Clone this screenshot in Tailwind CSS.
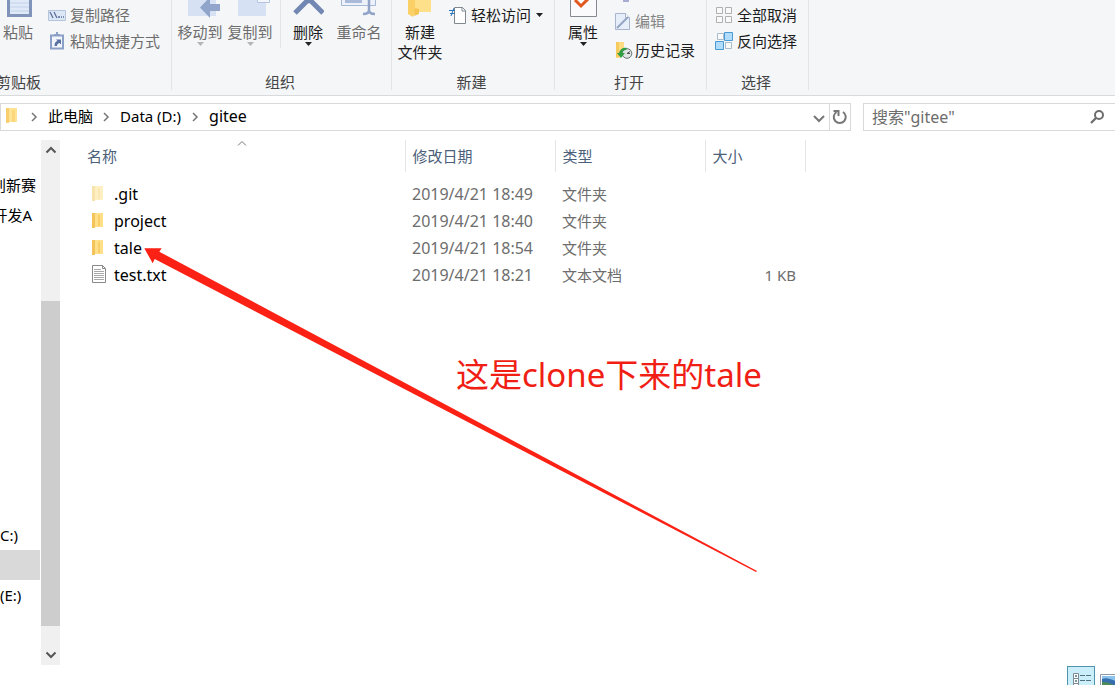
<!DOCTYPE html>
<html lang="zh-CN">
<head>
<meta charset="utf-8">
<title>gitee</title>
<script src="https://cdn.jsdelivr.net/npm/@tailwindcss/browser@4"></script>
</head>
<body class="h-screen overflow-hidden flex flex-col bg-white text-[15px] leading-5 text-[#1c1c1c] font-['Noto_Sans','Noto_Sans_CJK_SC',sans-serif]">

<!-- Ribbon -->
<header class="flex h-24 shrink-0 whitespace-nowrap bg-[#f5f6f8] border-b border-[#d9dadc]">
  <section class="relative flex w-[172px] shrink-0 flex-col">
    <div class="flex h-[72px] items-start">
      <button class="flex w-9 flex-col items-center text-[#6d6d6d]">
        <svg class="h-[22px] w-7" viewBox="-1 0 28 22"><path d="M2 0h25v17H2z" fill="#8093b8"/><path d="M5 0h19v14H5z" fill="#dfe9f7"/><path d="M5 3h19M5 7h19M5 11h19" stroke="#c3d2ea"/></svg>
        粘贴</button>
      <div class="ml-3 flex flex-col gap-1.5 pt-[5px] text-[#6d6d6d]">
        <button class="flex items-center gap-1"><svg class="h-5 w-[18px]" viewBox="0 0 18 20"><path d="M.5 5.500h17v10H.5z" fill="#dce7f6" stroke="#b5c3dd"/><path d="M2 7l3 6M6 7l3 6" stroke="#5c6f9a" stroke-width="1.300"/><path d="M10 12h2M13 12h1M15 12h1" stroke="#5c6f9a" stroke-width="1.500"/></svg>复制路径</button>
        <button class="flex items-center gap-1"><svg class="h-5 w-[18px]" viewBox="0 0 18 20"><path d="M3 4.500h12v13H3z" fill="#f2f6fc" stroke="#8ba0c6" stroke-width="2"/><path d="M6 5V3h2V1h2v2h2v2z" fill="#8ba0c6"/><path d="M6.500 15c0-3 1-4.500 3-5L8 8.500h5v5L11.500 12c-2 .5-2.500 1.500-2.500 3z" fill="#5972a2"/></svg>粘贴快捷方式</button>
      </div>
    </div>
    <div class="-ml-1 text-[#444]">剪贴板</div>
    <i class="absolute right-0 top-0 h-[90px] w-px bg-[#e3e4e7]"></i>
  </section>

  <section class="relative flex w-[220px] shrink-0 flex-col">
    <div class="flex h-[72px] items-start text-[#6d6d6d]">
      <button class="ml-[3px] flex w-[50px] flex-col items-center">
        <svg class="h-[22px] w-10" viewBox="-8 0 40 22"><path d="M0 0h28v16H0z" fill="#d6e1f3"/><path d="M12 7.500L22 -3v7h10v7H22v7z" fill="#91a4ca"/></svg>
        移动到
        <svg class="h-1 w-[7px]" viewBox="0 0 7 4"><path d="M0 0h7L3.500 4z" fill="#b5b5b5"/></svg></button>
      <button class="flex w-[50px] flex-col items-center">
        <svg class="h-[22px] w-10" viewBox="-8 0 40 22"><path d="M0 0h28v16H0z" fill="#d6e1f3"/><path d="M19.500-2v4.500h12V-2" fill="#f2f6fc" stroke="#b5c4df"/></svg>
        复制到
        <svg class="h-1 w-[7px]" viewBox="0 0 7 4"><path d="M0 0h7L3.500 4z" fill="#b5b5b5"/></svg></button>
      <i class="ml-[5px] h-12 w-px bg-[#e3e4e7]"></i>
      <button class="ml-1 flex w-[46px] flex-col items-center text-[#1c1c1c]">
        <svg class="h-[22px] w-8" viewBox="-1 0 32 22"><path d="M2 13L16 -1L30 13M10-6L16 0L22-6" fill="none" stroke="#7287b1" stroke-width="5"/></svg>
        删除
        <svg class="h-1 w-[7px]" viewBox="0 0 7 4"><path d="M0 0h7L3.500 4z" fill="#222"/></svg></button>
      <button class="ml-[3px] flex w-[50px] flex-col items-center">
        <svg class="h-[22px] w-9" viewBox="0 0 36 22"><path d="M.5-2v7.500h34V-2" fill="#edf2fa" stroke="#a7b7d6"/><path d="M4 0h17v3H4z" fill="#a9bada"/><path d="M28 0v12M22 14c4 0 6-1 6-4c0 3 2 4 6 4" fill="none" stroke="#91a4c8" stroke-width="2.500"/></svg>
        重命名</button>
    </div>
    <div class="pr-1 text-center text-[#444]">组织</div>
    <i class="absolute right-0 top-0 h-[90px] w-px bg-[#e3e4e7]"></i>
  </section>

  <section class="relative flex w-[163px] shrink-0 flex-col">
    <div class="flex h-[72px] items-start">
      <button class="ml-1 flex w-12 flex-col items-center">
        <svg class="h-[22px] w-7" viewBox="0 0 28 22"><path d="M2 0h23v12H2z" fill="#ffe08a"/><path d="M2 0h7v12l-2 5-5-3z" fill="#fbd066"/><path d="M9 8l4 1v5l-5 2z" fill="#f5c453"/></svg>
        <span>新建<br>文件夹</span></button>
      <button class="ml-[5px] mt-[5px] flex items-center gap-1"><svg class="h-5 w-[18px]" viewBox="0 0 18 20"><path d="M5.500 2.500h8l3 3v13h-11z" fill="#fff" stroke="#81888f"/><path d="M13 2.500v3.500h3.500" fill="none" stroke="#81888f"/><path d="M0 5.500h6M1 8.500h5" stroke="#2b74b5" stroke-width="1.200"/><path d="M5 3L2 11" stroke="#2b74b5"/></svg>轻松访问<svg class="ml-px h-1 w-[7px]" viewBox="0 0 7 4"><path d="M0 0h7L3.500 4z" fill="#222"/></svg></button>
    </div>
    <div class="pr-1 text-center text-[#444]">新建</div>
    <i class="absolute right-0 top-0 h-[90px] w-px bg-[#e3e4e7]"></i>
  </section>

  <section class="relative flex w-[152px] shrink-0 flex-col">
    <div class="flex h-[72px] items-start">
      <button class="ml-2 flex w-10 flex-col items-center">
        <svg class="h-[22px] w-7" viewBox="-1 0 28 22"><path d="M.5-1v17.500h26V-1" fill="#fafafc" stroke="#858991"/><path d="M5 0L11 6L20-3" fill="none" stroke="#e2571e" stroke-width="3"/></svg>
        属性
        <svg class="h-1 w-[7px]" viewBox="0 0 7 4"><path d="M0 0h7L3.500 4z" fill="#222"/></svg></button>
      <div class="ml-3 flex flex-col">
        <svg class="h-[11px] w-5" viewBox="0 0 20 11"><path d="M8 0h6v2H8z" fill="#a8abd3"/></svg>
        <button class="flex items-center gap-0.5 text-[#858585]"><svg class="h-5 w-[18px]" viewBox="1 0 18 20"><path d="M1.500 2.500h10l4 4v12h-14z" fill="#e6eef9" stroke="#a8b5cd"/><path d="M11.500 2.500v4h4" fill="#fff" stroke="#a8b5cd"/><path d="M3 17L14 6" stroke="#94a5c4" stroke-width="2"/></svg>编辑</button>
        <button class="mt-[9px] flex items-center gap-0.5"><svg class="h-5 w-[18px]" viewBox="0 0 18 20"><path d="M1 2h8v7l-4 9H1z" fill="#ffdc82"/><path d="M1 2h3v15H1z" fill="#f7ca5d"/><circle cx="12" cy="13.500" r="4.800" fill="#dfe5e5" stroke="#68736f"/><path d="M12 13.500l3-2M12 13.500h3" stroke="#555"/><path d="M4 13c1-4 4-6 8-5l-1 2c-2 0-3 1-4 3h3l-4 5-4-5z" fill="#2f9e44"/></svg>历史记录</button>
      </div>
    </div>
    <div class="pr-1 text-center text-[#444]">打开</div>
    <i class="absolute right-0 top-0 h-[90px] w-px bg-[#e3e4e7]"></i>
  </section>

  <section class="relative flex w-[102px] shrink-0 flex-col">
    <div class="flex h-[72px] flex-col items-start gap-1.5 pl-2 pt-[5px]">
      <button class="flex items-center gap-1"><svg class="h-5 w-[18px]" viewBox="0 0 18 20"><path d="M1.500 2.500h6v6h-6zM10.500 2.500h6v6h-6zM1.500 11.500h6v6h-6zM10.500 11.500h6v6h-6z" fill="#fafafa" stroke="#b0b0b0"/></svg>全部取消</button>
      <button class="flex items-center gap-1"><svg class="h-5 w-[18px]" viewBox="0 0 18 20"><path d="M2.500 2.500h6v6h-6zM10.500 11.500h6v6h-6z" fill="#fafafa" stroke="#a9bccb"/><path d="M9.500 1.500h8v8h-8zM.5 10.500h8v8h-8z" fill="#b2dcfb" stroke="#4a9ad4"/></svg>反向选择</button>
    </div>
    <div class="pr-1 text-center text-[#444]">选择</div>
    <i class="absolute right-0 top-0 h-[90px] w-px bg-[#e3e4e7]"></i>
  </section>
</header>

<!-- Address bar and search -->
<div class="flex h-[42px] shrink-0 gap-3 pt-[7px]">
  <nav class="flex h-7 flex-1 items-center border border-[#d9d9d9] text-black">
    <svg class="ml-1 h-5 w-4" viewBox="0 1 16 20"><path d="M1 2h11v14H1z" fill="#ffe394"/><path d="M1 2h3v15H1z" fill="#f8cf6c"/><path d="M7 4h3v12H7z" fill="#fbd67a"/></svg>
    <svg class="ml-2.5 h-2.5 w-[7px]" viewBox="0 0 7 10"><path d="M1 1l4 4-4 4" fill="none" stroke="#777" stroke-width="1.500"/></svg>
    <a href="#" class="ml-2.5 pb-0.5">此电脑</a>
    <svg class="ml-2.5 h-2.5 w-[7px]" viewBox="0 0 7 10"><path d="M1 1l4 4-4 4" fill="none" stroke="#777" stroke-width="1.500"/></svg>
    <a href="#" class="ml-2.5 pb-0.5">Data (D:)</a>
    <svg class="ml-[11px] h-2.5 w-[7px]" viewBox="0 0 7 10"><path d="M1 1l4 4-4 4" fill="none" stroke="#777" stroke-width="1.500"/></svg>
    <a href="#" class="ml-2.5 pb-0.5 text-[16px] leading-5">gitee</a>
    <button aria-label="展开" class="ml-auto flex h-full w-5 items-center justify-center"><svg class="mt-1 h-2 w-3" viewBox="0 0 12 8"><path d="M1 1l5 5 5-5" fill="none" stroke="#777" stroke-width="2"/></svg></button>
    <button aria-label="刷新" class="flex h-full w-[21px] items-center justify-center border-l border-[#d9d9d9]"><svg class="h-4 w-4" viewBox="0 0 16 16"><path d="M11 3a6 6 0 1 1-6.500 0" fill="none" stroke="#777" stroke-width="2"/><path d="M1.500 2h5v5" fill="none" stroke="#777" stroke-width="2"/></svg></button>
  </nav>
  <label class="flex h-7 w-[252px] items-center border border-r-0 border-[#d9d9d9] pl-2 pr-2.5">
    <input type="text" aria-label="搜索" placeholder='搜索"gitee"' class="min-w-0 flex-1 bg-transparent text-[16px] leading-5 outline-none placeholder:text-[#6d6d6d]">
    <svg class="h-4 w-4" viewBox="0 0 16 16"><circle cx="10" cy="6" r="4" fill="none" stroke="#6d6d6d" stroke-width="2"/><path d="M7 9L2 14" stroke="#6d6d6d" stroke-width="2.300"/></svg>
  </label>
</div>

<!-- Tree, scroll bar and file list -->
<main class="flex min-h-0 flex-1 pt-0.5">
  <nav class="flex w-10 shrink-0 flex-col overflow-hidden whitespace-nowrap pt-[30px] text-black">
    <a href="#" class="flex h-[30px] shrink-0 items-center justify-end pr-1">创新赛</a>
    <a href="#" class="flex h-[30px] shrink-0 items-center justify-end pr-2">开发A</a>
    <a href="#" class="mt-[290px] flex h-[30px] shrink-0 items-center">C:)</a>
    <a href="#" aria-label="Data (D:)" class="h-[30px] shrink-0 bg-[#d9d9d9]"></a>
    <a href="#" class="flex h-[30px] shrink-0 items-center">(E:)</a>
  </nav>
  <div class="mx-px flex w-[19px] shrink-0 flex-col items-center bg-[#f0f0f0]">
    <button aria-label="向上滚动" class="flex h-5 items-center"><svg class="h-2 w-3" viewBox="0 0 12 8"><path d="M1.500 6.500L6 2l4.500 4.500" fill="none" stroke="#555" stroke-width="2"/></svg></button>
    <div class="mt-[141px] w-full flex-1 bg-[#cdcdcd]"></div>
    <button aria-label="向下滚动" class="mt-[19px] flex h-5 items-center"><svg class="h-2 w-3" viewBox="0 0 12 8"><path d="M1.500 1.500L6 6l4.500-4.500" fill="none" stroke="#555" stroke-width="2"/></svg></button>
  </div>
  <div class="relative min-w-0 flex-1 pl-5">
    <table class="w-[724px] table-fixed border-collapse whitespace-nowrap text-[#6d6d6d]">
      <colgroup><col class="w-[324px]"><col class="w-[150px]"><col class="w-[150px]"><col class="w-[100px]"></colgroup>
      <thead>
        <tr class="h-8 text-left text-[#4c607a]">
          <th class="relative border-r border-[#e5e5e5] pl-1.5 font-normal">名称<svg class="absolute left-[156px] top-0 h-1.5 w-2.5" viewBox="0 0 10 6"><path d="M1 5.500L5 1.500l4 4" fill="none" stroke="#777"/></svg></th>
          <th class="border-r border-[#e5e5e5] pl-[7px] font-normal">修改日期</th>
          <th class="border-r border-[#e5e5e5] pl-[7px] font-normal">类型</th>
          <th class="border-r border-[#e5e5e5] pl-[7px] font-normal">大小</th>
        </tr>
      </thead>
      <tbody>
        <tr class="h-2"><td colspan="4" class="p-0"></td></tr>
        <tr class="h-[27px]"><td class="p-0 pl-2"><span class="flex items-center gap-1.5 text-[16px] leading-5 text-black"><svg class="h-5 w-[19px]" viewBox="0 0 19 20"><path d="M3 2h11v14H3z" fill="#fff0c4"/><path d="M3 2h3v15H3z" fill="#f9e3ac"/><path d="M9 4h2v11H9z" fill="#fbe8b6"/></svg>.git</span></td><td class="p-0 pl-[7px] text-[16px] leading-5">2019/4/21 18:49</td><td class="p-0 pl-[7px]">文件夹</td><td></td></tr>
        <tr class="h-[27px]"><td class="p-0 pl-2"><span class="flex items-center gap-1.5 text-[16px] leading-5 text-black"><svg class="h-5 w-[19px]" viewBox="0 0 19 20"><path d="M3 2h11v14H3z" fill="#ffdf88"/><path d="M3 2h3v15H3z" fill="#f4c45b"/><path d="M9 4h2v11H9z" fill="#f8ce6b"/></svg>project</span></td><td class="p-0 pl-[7px] text-[16px] leading-5">2019/4/21 18:40</td><td class="p-0 pl-[7px]">文件夹</td><td></td></tr>
        <tr class="h-[27px]"><td class="p-0 pl-2"><span class="flex items-center gap-1.5 text-[16px] leading-5 text-black"><svg class="h-5 w-[19px]" viewBox="0 0 19 20"><path d="M3 2h11v14H3z" fill="#ffdf88"/><path d="M3 2h3v15H3z" fill="#f4c45b"/><path d="M9 4h2v11H9z" fill="#f8ce6b"/></svg>tale</span></td><td class="p-0 pl-[7px] text-[16px] leading-5">2019/4/21 18:54</td><td class="p-0 pl-[7px]">文件夹</td><td></td></tr>
        <tr class="h-[27px]"><td class="p-0 pl-2"><span class="flex items-center gap-1.5 text-[16px] leading-5 text-black"><svg class="h-5 w-[19px]" viewBox="0 0 19 20"><path d="M3.500.5h10l3 3v14h-13z" fill="#fff" stroke="#8a8a8a"/><path d="M13.500.5v3h3" fill="none" stroke="#8a8a8a"/><path d="M5 4.500h7M5 6.500h10M5 8.500h10M5 10.500h10M5 12.500h10M5 14.500h10" stroke="#a8a8a8"/></svg>test.txt</span></td><td class="p-0 pl-[7px] text-[16px] leading-5">2019/4/21 18:21</td><td class="p-0 pl-[7px]">文本文档</td><td class="p-0 pr-[9px] text-right">1 KB</td></tr>
      </tbody>
    </table>
    <!-- Red annotation over the list -->
    <svg class="pointer-events-none absolute left-[82px] top-[106px] h-[328px] w-[616px]" viewBox="0 0 616 328"><path d="M1.300 2.300L18.700 2.300L16.300 5.700L614 325L613 326L11.700 13L9.700 17.300Z" fill="#fb2114"/></svg>
    <p class="absolute left-[395px] top-[211px] whitespace-nowrap text-[33px] leading-[48px] text-[#f01e14]">这是clone下来的tale</p>
  </div>
</main>

<!-- View switches -->
<footer class="flex h-5 shrink-0 items-start justify-end gap-[5px] overflow-hidden pt-px">
  <button aria-label="详细信息" class="h-7 w-7 shrink-0 border border-[#4f93ad] bg-[#cbeefb] pl-[5px] pt-1.5"><svg class="h-5 w-5" viewBox="0 0 20 20"><path d="M.5.5h5v5h-5zM.5 5.500h5v5h-5zM.5 10.500h5v5h-5z" fill="#fff" stroke="#7b8b94"/><path d="M2 3h2M2 8h2M2 13h2" stroke="#55707e" stroke-width="1.500"/><path d="M7 2.500h5M13 2.500h5M7 7.500h5M13 7.500h5M7 12.500h5" stroke="#55707e"/></svg></button>
  <button aria-label="大图标" class="h-7 w-[15px] shrink-0 overflow-hidden pt-[7px]"><svg class="h-5 w-5" viewBox="0 0 20 20"><path d="M.5.5h19v16H.5z" fill="#fff" stroke="#8e98a8"/><path d="M2 2h16v13H2z" fill="#8cc3ec"/><path d="M2 5c5-2 8 0 16 3v7H2z" fill="#376fae"/><path d="M2 8c5 0 8 1 16 5v2H2z" fill="#4d8b58"/></svg></button>
</footer>
</body>
</html>
